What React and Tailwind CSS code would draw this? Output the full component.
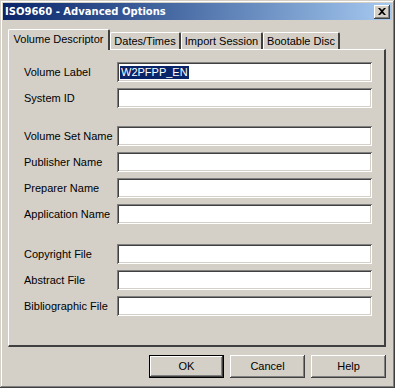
const font = "font-['Liberation_Sans','Arial',sans-serif]";

const raised =
  "shadow-[inset_-1px_-1px_#404040,inset_1px_1px_#ffffff,inset_-2px_-2px_#808080,inset_2px_2px_#d4d0c8]";
const sunken =
  "shadow-[inset_1px_1px_#808080,inset_-1px_-1px_#ffffff,inset_2px_2px_#404040,inset_-2px_-2px_#d4d0c8]";

function Field({ label, value, selected }) {
  return (
    <div className="flex items-center h-[20px]">
      <div className="w-[93px] text-[11px] text-black leading-none whitespace-nowrap">{label}</div>
      <div className={`w-[255px] h-[20px] bg-white flex items-center px-[3px] ${sunken}`}>
        {value && (
          <span
            className={`text-[11px] leading-[13px] px-[1px] ${
              selected ? "bg-[#0a246a] text-white" : "text-black"
            }`}
          >
            {value}
          </span>
        )}
      </div>
    </div>
  );
}

function Tab({ label, active, width }) {
  if (active) {
    return (
      <div
        className="relative z-10 h-[21px] -mb-[1px] bg-[#d4d0c8] border-l border-t border-white border-r-2 border-r-[#404040] rounded-t-[2px] flex items-center justify-center pb-[2px] text-[11px] text-black whitespace-nowrap"
        style={{ width }}
      >
        {label}
      </div>
    );
  }
  return (
    <div
      className="h-[17px] bg-[#d4d0c8] border-l border-t border-white border-r-2 border-r-[#404040] rounded-t-[2px] flex items-center justify-center text-[11px] text-black whitespace-nowrap"
      style={{ width }}
    >
      {label}
    </div>
  );
}

function Button({ label, isDefault }) {
  return (
    <div
      className={`w-[75px] h-[23px] flex items-center justify-center text-[11px] text-black bg-[#d4d0c8] ${
        isDefault
          ? "shadow-[inset_0_0_0_1px_#000000,inset_-2px_-2px_#404040,inset_2px_2px_#ffffff,inset_-3px_-3px_#808080]"
          : raised
      }`}
    >
      {label}
    </div>
  );
}

export default function App() {
  return (
    <div
      className={`w-[395px] h-[388px] bg-[#d4d0c8] p-[3px] flex flex-col ${font} shadow-[inset_-1px_-1px_#404040,inset_1px_1px_#d4d0c8,inset_-2px_-2px_#808080,inset_2px_2px_#ffffff]`}
    >
      <div className="h-[17px] flex items-center justify-between pl-[2px] pr-[2px] bg-gradient-to-r from-[#0a246a] to-[#a6caf0]">
        <span className="text-white font-bold text-[10px] leading-none font-['DejaVu_Sans',sans-serif] whitespace-nowrap">
          ISO9660 - Advanced Options
        </span>
        <div
          className={`w-[16px] h-[14px] bg-[#d4d0c8] flex items-center justify-center ${raised}`}
        >
          <svg width="8" height="7" viewBox="0 0 8 7">
            <path d="M0 0h2l2 2 2-2h2L5 3.5 8 7H6L4 5 2 7H0l3-3.5z" fill="#000" />
          </svg>
        </div>
      </div>

      <div className="mt-[9px] ml-[5px] flex items-end">
        <Tab label="Volume Descriptor" active width={102} />
        <Tab label="Dates/Times" width={71} />
        <Tab label="Import Session" width={82} />
        <Tab label="Bootable Disc" width={77} />
      </div>

      <div
        className="ml-[5px] w-[378px] h-[298px] pt-[12px] pl-[15px] flex flex-col border-l border-t border-white border-r-2 border-b-2 border-r-[#404040] border-b-[#404040]"
      >
        <div className="flex flex-col gap-[6px]">
          <Field label="Volume Label" value="W2PFPP_EN" selected />
          <Field label="System ID" />
        </div>
        <div className="flex flex-col gap-[6px] mt-[18px]">
          <Field label="Volume Set Name" />
          <Field label="Publisher Name" />
          <Field label="Preparer Name" />
          <Field label="Application Name" />
        </div>
        <div className="flex flex-col gap-[6px] mt-[20px]">
          <Field label="Copyright File" />
          <Field label="Abstract File" />
          <Field label="Bibliographic File" />
        </div>
      </div>

      <div className="mt-[8px] ml-[146px] flex gap-[6px]">
        <Button label="OK" isDefault />
        <Button label="Cancel" />
        <Button label="Help" />
      </div>
    </div>
  );
}
